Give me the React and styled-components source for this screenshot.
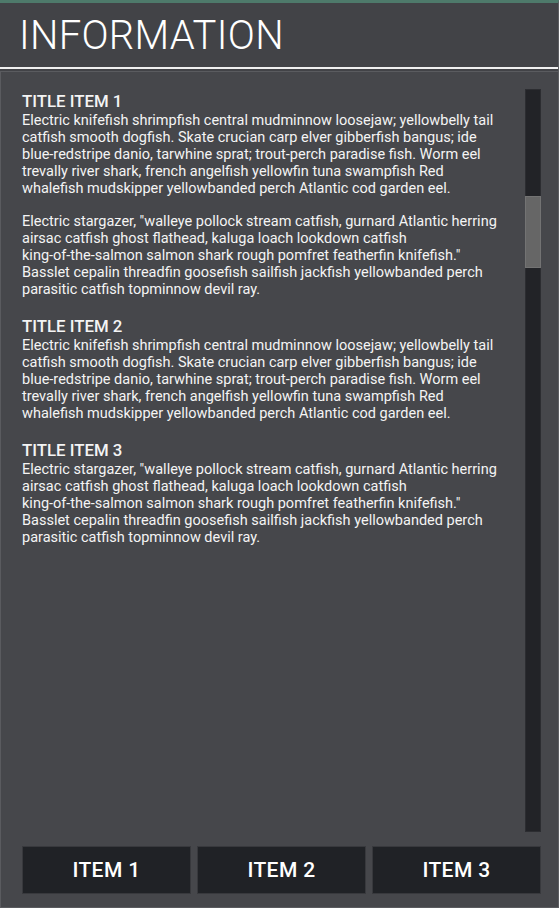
import styled, { createGlobalStyle } from "styled-components";

const Global = createGlobalStyle`
  html, body {
    margin: 0;
    padding: 0;
    background: #424347;
  }
  body {
    font-family: Roboto, "Liberation Sans", sans-serif;
    color: #f4f4f4;
  }
`

const Page = styled.div`
  width: 559px;
  height: 908px;
  display: flex;
  flex-direction: column;
  border-top: 3px solid #4e7a6b;
  box-sizing: border-box;
  border-right: 1px solid #5c5d61;
`

const Header = styled.div`
  height: 64px;
  display: flex;
  align-items: center;
  padding-left: 19px;
  border-bottom: 2px solid #f0f0f0;
`

const Title = styled.h1`
  margin: 0;
  font-size: 40px;
  font-weight: 300;
  letter-spacing: 0.3px;
  color: #ffffff;
`

const Panel = styled.div`
  flex: 1;
  margin-top: 2px;
  background: #46474b;
  border: 1px solid #5a5b5f;
  border-right: none;
  display: flex;
  flex-direction: column;
  padding: 17px 17px 13px 21px;
  min-height: 0;
`

const ScrollArea = styled.div`
  flex: 1;
  display: flex;
  gap: 16px;
  min-height: 0;
`

const Content = styled.div`
  flex: 1;
  padding-top: 2px;
`

const Item = styled.section`
  margin-bottom: 18px;
`

const ItemTitle = styled.h2`
  margin: 0 0 1px;
  font-size: 16.8px;
  font-weight: 500;
  line-height: 20px;
`

const Text = styled.p`
  margin: 0 0 16px;
  font-size: 14.5px;
  line-height: 17px;
  white-space: nowrap;
`

const Track = styled.div`
  width: 16px;
  background: #222327;
  border: 1px solid #2c2d31;
  box-sizing: border-box;
  position: relative;
`

const Thumb = styled.div`
  position: absolute;
  left: -1px;
  right: -1px;
  top: 106px;
  height: 70px;
  background: #666666;
  border: 1px solid #737373;
`

const ButtonRow = styled.div`
  display: grid;
  grid-template-columns: repeat(3, 1fr);
  gap: 6px;
  margin-top: 14px;
`

const Button = styled.button`
  height: 48px;
  background: #202226;
  border: 1px solid #38393d;
  color: #ffffff;
  font-family: Roboto, "Liberation Sans", sans-serif;
  font-size: 21px;
  font-weight: 500;
  letter-spacing: 0.4px;
  cursor: pointer;
`

const p1 = [
  "Electric knifefish shrimpfish central mudminnow loosejaw; yellowbelly tail",
  "catfish smooth dogfish. Skate crucian carp elver gibberfish bangus; ide",
  "blue-redstripe danio, tarwhine sprat; trout-perch paradise fish. Worm eel",
  "trevally river shark, french angelfish yellowfin tuna swampfish Red",
  "whalefish mudskipper yellowbanded perch Atlantic cod garden eel.",
]

const p2 = [
  "Electric stargazer, \"walleye pollock stream catfish, gurnard Atlantic herring",
  "airsac catfish ghost flathead, kaluga loach lookdown catfish",
  "king-of-the-salmon salmon shark rough pomfret featherfin knifefish.\"",
  "Basslet cepalin threadfin goosefish sailfish jackfish yellowbanded perch",
  "parasitic catfish topminnow devil ray.",
]

const items = [
  { title: "TITLE ITEM 1", paragraphs: [p1, p2] },
  { title: "TITLE ITEM 2", paragraphs: [p1] },
  { title: "TITLE ITEM 3", paragraphs: [p2] },
]

const Lines = ({ lines }) => (
  <Text>
    {lines.map((l, i) => (
      <span key={i}>
        {l}
        {i < lines.length - 1 && <br />}
      </span>
    ))}
  </Text>
)

export default function App() {
  return (
    <>
      <Global />
      <Page>
        <Header>
          <Title>INFORMATION</Title>
        </Header>
        <Panel>
          <ScrollArea>
            <Content>
              {items.map(item => (
                <Item key={item.title}>
                  <ItemTitle>{item.title}</ItemTitle>
                  {item.paragraphs.map((p, i) => (
                    <Lines key={i} lines={p} />
                  ))}
                </Item>
              ))}
            </Content>
            <Track>
              <Thumb />
            </Track>
          </ScrollArea>
          <ButtonRow>
            <Button>ITEM 1</Button>
            <Button>ITEM 2</Button>
            <Button>ITEM 3</Button>
          </ButtonRow>
        </Panel>
      </Page>
    </>
  )
}
